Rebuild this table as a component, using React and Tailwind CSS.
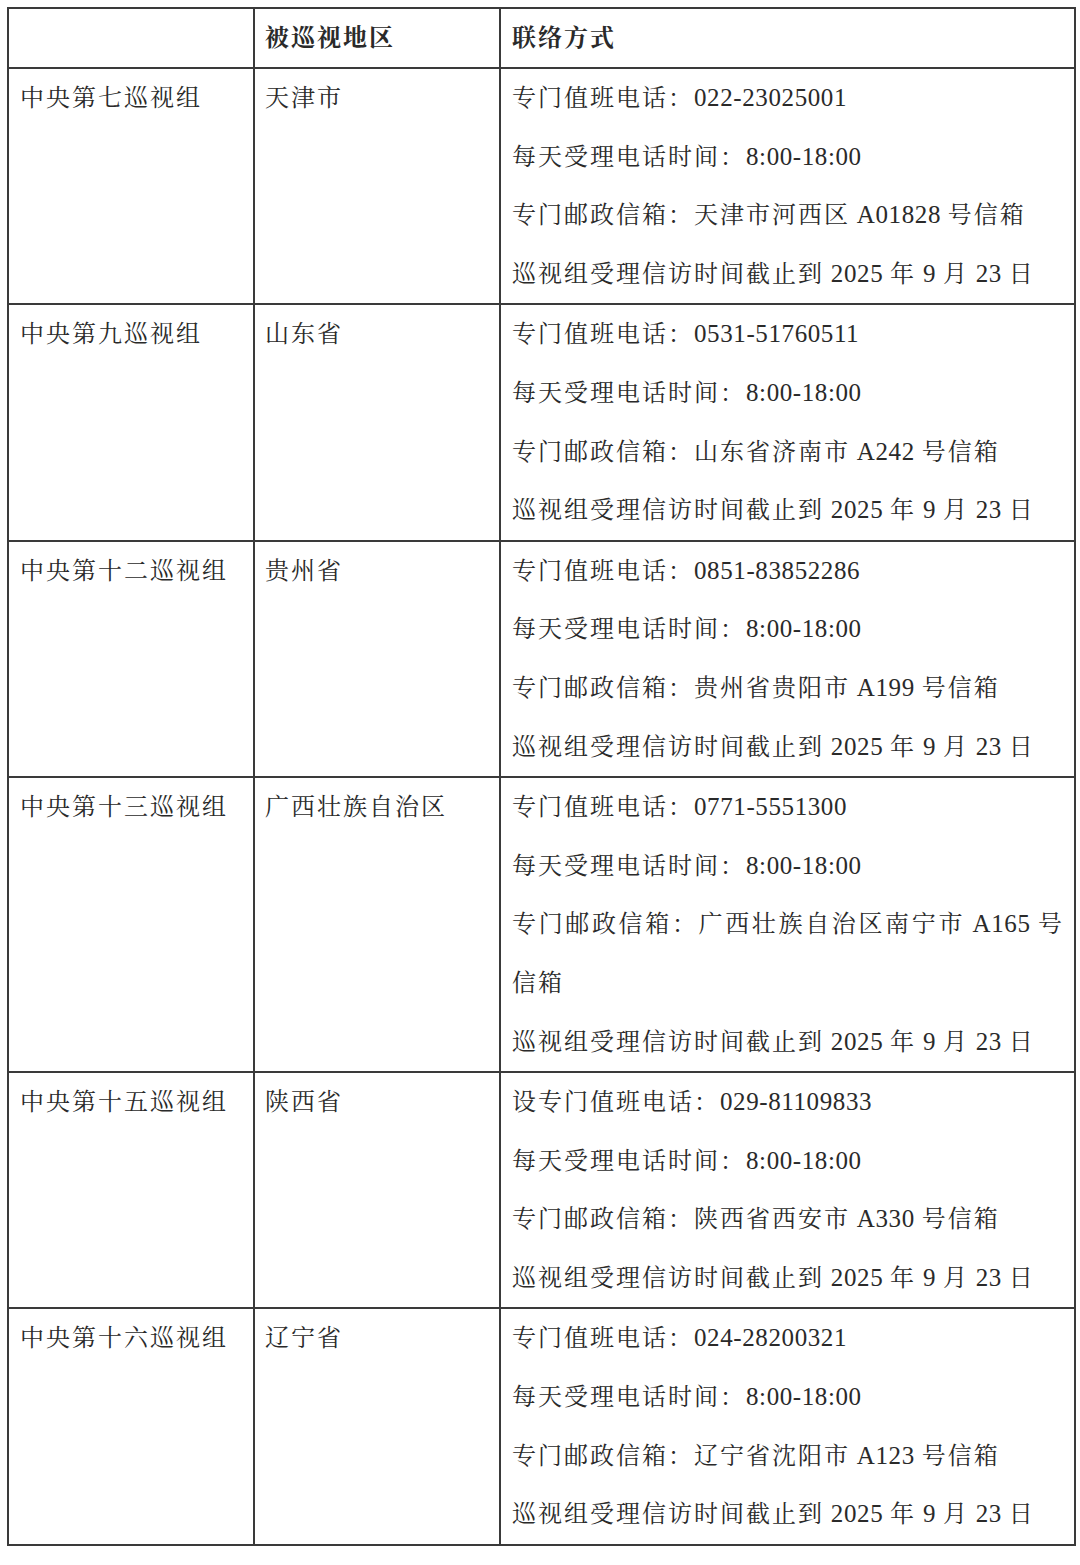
import React from "react";

const rows = [
  {
    g: "中央第七巡视组",
    r: "天津市",
    c: [
      "专门值班电话：022-23025001",
      "每天受理电话时间：8:00-18:00",
      "专门邮政信箱：天津市河西区 A01828 号信箱",
      "巡视组受理信访时间截止到 2025 年 9 月 23 日",
    ],
  },
  {
    g: "中央第九巡视组",
    r: "山东省",
    c: [
      "专门值班电话：0531-51760511",
      "每天受理电话时间：8:00-18:00",
      "专门邮政信箱：山东省济南市 A242 号信箱",
      "巡视组受理信访时间截止到 2025 年 9 月 23 日",
    ],
  },
  {
    g: "中央第十二巡视组",
    r: "贵州省",
    c: [
      "专门值班电话：0851-83852286",
      "每天受理电话时间：8:00-18:00",
      "专门邮政信箱：贵州省贵阳市 A199 号信箱",
      "巡视组受理信访时间截止到 2025 年 9 月 23 日",
    ],
  },
  {
    g: "中央第十三巡视组",
    r: "广西壮族自治区",
    c: [
      "专门值班电话：0771-5551300",
      "每天受理电话时间：8:00-18:00",
      "专门邮政信箱：广西壮族自治区南宁市 A165 号信箱",
      "巡视组受理信访时间截止到 2025 年 9 月 23 日",
    ],
  },
  {
    g: "中央第十五巡视组",
    r: "陕西省",
    c: [
      "设专门值班电话：029-81109833",
      "每天受理电话时间：8:00-18:00",
      "专门邮政信箱：陕西省西安市 A330 号信箱",
      "巡视组受理信访时间截止到 2025 年 9 月 23 日",
    ],
  },
  {
    g: "中央第十六巡视组",
    r: "辽宁省",
    c: [
      "专门值班电话：024-28200321",
      "每天受理电话时间：8:00-18:00",
      "专门邮政信箱：辽宁省沈阳市 A123 号信箱",
      "巡视组受理信访时间截止到 2025 年 9 月 23 日",
    ],
  },
];

function T({ s }) {
  const parts = s.match(/[\x00-\x7f]+|[^\x00-\x7f]+/g) || [];
  return (
    <>
      {parts.map((p, i) =>
        /^[\x00-\x7f]+$/.test(p) ? (
          <span key={i} className="tracking-[0.6px] text-[25px]">
            {p}
          </span>
        ) : (
          <span key={i} className="tracking-[2px]">
            {p}
          </span>
        )
      )}
    </>
  );
}

const font = {
  fontFamily:
    '"Liberation Serif", "Noto Serif CJK SC", "Noto Sans CJK SC", serif',
};

export default function App() {
  return (
    <div
      className="w-[1080px] h-[1565px] bg-white pt-[7px] pl-[7px] text-[#2a2a2a]"
      style={font}
    >
      <table className="border-collapse w-[1069px] table-fixed text-[24px]">
        <colgroup>
          <col className="w-[246px]" />
          <col className="w-[246px]" />
          <col />
        </colgroup>
        <thead>
          <tr className="h-[60px]">
            <th className="border-2 border-[#3a3a3a] p-0"></th>
            <th className="border-2 border-[#3a3a3a] pl-[10px] text-left align-middle font-bold leading-[58px]">
              <T s="被巡视地区" />
            </th>
            <th className="border-2 border-[#3a3a3a] pl-[11px] text-left align-middle font-bold leading-[58px]">
              <T s="联络方式" />
            </th>
          </tr>
        </thead>
        <tbody>
          {rows.map((row, i) => (
            <tr key={i}>
              <td className="border-2 border-[#3a3a3a] align-top pl-[11px] leading-[58.6px] font-normal">
                <T s={row.g} />
              </td>
              <td className="border-2 border-[#3a3a3a] align-top pl-[10px] leading-[58.6px]">
                <T s={row.r} />
              </td>
              <td className="border-2 border-[#3a3a3a] align-top pl-[11px] pr-[10px] leading-[58.6px]">
                {row.c.map((line, j) => (
                  <div key={j} className="text-justify">
                    <T s={line} />
                  </div>
                ))}
              </td>
            </tr>
          ))}
        </tbody>
      </table>
    </div>
  );
}
